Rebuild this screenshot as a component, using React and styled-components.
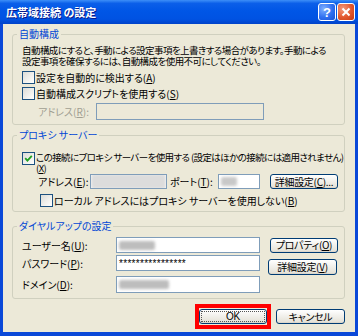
import React from 'react';
import styled, { createGlobalStyle } from 'styled-components';

const GlobalStyle = createGlobalStyle`
  html, body {
    margin: 0;
    padding: 0;
  }
  body {
    background: #ffffff;
    font-family: "Noto Sans CJK JP", "Noto Sans", sans-serif;
    font-size: 10px;
    line-height: 13px;
    font-feature-settings: "palt";
    color: #000;
  }
`;

const Window = styled.div`
  width: 358px;
  height: 336px;
  display: flex;
  flex-direction: column;
  overflow: hidden;
`;

const TitleBar = styled.div`
  height: 24px;
  flex: none;
  display: flex;
  align-items: center;
  padding: 0 3px 0 6px;
  box-sizing: border-box;
  background: linear-gradient(
    to bottom,
    #3d8ff8 0%,
    #0b5fe9 14%,
    #0056e6 45%,
    #0052e2 80%,
    #0042c8 100%
  );
`;

const Title = styled.div`
  flex: 1;
  color: #fff;
  font-weight: bold;
  font-size: 11px;
  line-height: 14px;
  text-shadow: 1px 1px 0 #0a1a8a;
`;

const CaptionButton = styled.div`
  width: 18px;
  height: 18px;
  box-sizing: border-box;
  border: 1px solid #fff;
  border-radius: 3px;
  margin-left: 1px;
  display: flex;
  align-items: center;
  justify-content: center;
  color: #fff;
  font-family: "Liberation Sans", sans-serif;
  font-weight: bold;
  font-size: 13px;
  background: ${p =>
    p.$close
      ? 'radial-gradient(circle at 30% 30%, #f3997c 0%, #e2582f 55%, #c63b12 100%)'
      : 'radial-gradient(circle at 30% 30%, #7fb0ff 0%, #2f6ff0 55%, #1a52d6 100%)'};
`;

const Body = styled.div`
  flex: 1;
  background: #ece9d8;
  border: 3px solid #0a48d8;
  border-top: none;
  border-bottom-width: 4px;
  padding: 4px 10px 0 9px;
  display: flex;
  flex-direction: column;
`;

const Group = styled.fieldset`
  margin: ${p => p.$top || 0}px 0 0 0;
  padding: 0;
  border: 1px solid #d0d0bf;
  border-radius: 3px;
  min-width: 0;
`;

const Legend = styled.legend`
  margin-left: 4px;
  padding: 0 2px;
  color: #0046d5;
  font-size: 10px;
  line-height: 12px;
`;

const GroupInner = styled.div`
  padding: ${p => p.$pad || '0 9px 4px 9px'};
  display: flex;
  flex-direction: column;
`;

const Para = styled.p`
  margin: 5px 0 0 0;
  font-size: 9.5px;
  line-height: 11px;
  letter-spacing: -0.55px;
  white-space: nowrap;
`;

const CheckRow = styled.label`
  display: flex;
  align-items: ${p => (p.$top ? 'flex-start' : 'center')};
  margin: ${p => p.$m || '0'};
  padding-left: ${p => p.$indent || 0}px;
  font-size: ${p => p.$fs || 10}px;
  line-height: ${p => p.$lh || 13}px;
  white-space: nowrap;
  letter-spacing: ${p => p.$ls || 0}px;
`;

const Box = styled.span`
  width: 13px;
  height: 13px;
  box-sizing: border-box;
  border: 1px solid #1c5180;
  background: linear-gradient(135deg, #dcdcd7 0%, #f5f5f2 70%, #ffffff 100%);
  display: inline-flex;
  align-items: center;
  justify-content: center;
  flex: none;
  margin-right: 1px;
`;

const Row = styled.div`
  display: flex;
  align-items: center;
  margin: ${p => p.$m || '0'};
  padding-left: ${p => p.$indent || 0}px;
`;

const Label = styled.span`
  width: ${p => p.$w}px;
  flex: none;
  margin-top: ${p => p.$mt || 0}px;
  color: ${p => (p.$disabled ? '#a19f92' : '#000')};
  white-space: nowrap;
`;

const Field = styled.div`
  width: ${p => p.$w}px;
  height: ${p => p.$h || 16}px;
  flex: none;
  box-sizing: border-box;
  margin-top: ${p => p.$mt || 0}px;
  border: 1px solid #7f9db9;
  background: ${p => (p.$disabled ? '#ece9d8' : '#ffffff')};
  display: flex;
  align-items: center;
  padding-left: ${p => (p.$flush ? 0 : 2)}px;
  overflow: hidden;
  font-family: "Liberation Sans", sans-serif;
  font-size: 10px;
  letter-spacing: 0.3px;
`;

const Smudge = styled.div`
  width: ${p => p.$w}px;
  height: ${p => p.$h || 8}px;
  background: ${p => p.$c || '#bdbdbd'};
  filter: blur(1.6px);
  border-radius: 2px;
`;

const Button = styled.div`
  width: ${p => p.$w}px;
  height: ${p => p.$h || 15}px;
  flex: none;
  box-sizing: border-box;
  margin-left: ${p => p.$ml || 0}px;
  margin-top: ${p => p.$shift || 0}px;
  margin-bottom: ${p => -(p.$shift || 0)}px;
  border: 1px solid #003c74;
  border-radius: 3px;
  background: linear-gradient(to bottom, #ffffff 0%, #f3f2ee 40%, #e6e3d9 90%, #d6d0c5 100%);
  display: flex;
  align-items: center;
  justify-content: center;
  font-size: 10px;
  line-height: 12px;
  letter-spacing: -0.3px;
  white-space: nowrap;
`;

const FocusRing = styled.div`
  margin: 1px;
  align-self: stretch;
  flex: 1;
  border: 1px dotted #555;
  display: flex;
  align-items: center;
  justify-content: center;
  font-family: "Liberation Sans", sans-serif;
`;

const DialGrid = styled.div`
  display: grid;
  grid-template-columns: 94px 144px auto;
  align-items: center;
  row-gap: 2px;
  margin-top: 5px;
`;

const Footer = styled.div`
  display: flex;
  justify-content: flex-end;
  align-items: center;
  margin-top: 5px;
`;

const Highlight = styled.div`
  border: 4px solid #ff0000;
  padding: 1px 0;
  margin-right: 5px;
`;

const Check = () => (
  <svg width="9" height="9" viewBox="0 0 9 9">
    <path d="M1.2 4.2 L3.4 6.6 L7.8 1.8" fill="none" stroke="#21a121" strokeWidth="1.8" />
  </svg>
);

const CloseGlyph = () => (
  <svg width="10" height="10" viewBox="0 0 10 10">
    <path d="M1.5 1.5 L8.5 8.5 M8.5 1.5 L1.5 8.5" stroke="#fff" strokeWidth="2" />
  </svg>
);

export default function App() {
  return (
    <>
      <GlobalStyle />
      <Window>
        <TitleBar>
          <Title>広帯域接続 の設定</Title>
          <CaptionButton>?</CaptionButton>
          <CaptionButton $close>
            <CloseGlyph />
          </CaptionButton>
        </TitleBar>
        <Body>
          <Group>
            <Legend>自動構成</Legend>
            <GroupInner $pad="0 9px 4px 9px">
              <Para>
                自動構成にすると、手動による設定事項を上書きする場合があります。手動による
                <br />
                設定事項を確保するには、自動構成を使用不可にしてください。
              </Para>
              <CheckRow $m="4px 0 0 0">
                <Box />
                <span>
                  設定を自動的に検出する(<u>A</u>)
                </span>
              </CheckRow>
              <CheckRow $m="3px 0 0 0">
                <Box />
                <span>
                  自動構成スクリプトを使用する(<u>S</u>)
                </span>
              </CheckRow>
              <Row $m="3px 0 0 0" $indent={16}>
                <Label $w={58} $disabled>
                  アドレス(<u>R</u>):
                </Label>
                <Field $w={168} $h={17} $disabled />
              </Row>
            </GroupInner>
          </Group>

          <Group $top={4}>
            <Legend>プロキシ サーバー</Legend>
            <GroupInner $pad="0 7px 4px 9px">
              <CheckRow $top $fs={9.5} $lh={11} $ls={-0.6} $m="11px 0 0 0">
                <Box>
                  <Check />
                </Box>
                <span>
                  この接続にプロキシ サーバーを使用する (設定はほかの接続には適用されません)
                  <br />
                  (<u>X</u>)
                </span>
              </CheckRow>
              <Row $indent={16}>
                <Label $w={52}>
                  アドレス(<u>E</u>):
                </Label>
                <Field $w={77} $h={15} $flush>
                  <Smudge $w={77} $h={15} $c="#dcdcdc" />
                </Field>
                <Label $w={48} style={{ marginLeft: 3 }}>
                  ポート(<u>T</u>):
                </Label>
                <Field $w={42} $h={15}>
                  <Smudge $w={16} $h={9} $c="#c8c8c8" />
                </Field>
                <Button $w={68} $ml={10}>
                  詳細設定(<u>C</u>)...
                </Button>
              </Row>
              <CheckRow $m="5px 0 0 0" $indent={18}>
                <Box />
                <span>
                  ローカル アドレスにはプロキシ サーバーを使用しない(<u>B</u>)
                </span>
              </CheckRow>
            </GroupInner>
          </Group>

          <Group $top={8}>
            <Legend>ダイヤルアップの設定</Legend>
            <GroupInner $pad="0 7px 5px 9px">
              <DialGrid>
                <Label>
                  ユーザー名(<u>U</u>):
                </Label>
                <Field $w={144}>
                  <Smudge $w={36} $h={9} />
                </Field>
                <Button $w={68} $ml={10}>
                  プロパティ(<u>O</u>)
                </Button>
                <Label>
                  パスワード(<u>P</u>):
                </Label>
                <Field $w={144}>****************</Field>
                <Button $w={69} $h={16} $ml={8} $shift={4}>
                  詳細設定(<u>V</u>)
                </Button>
                <Label $mt={3}>
                  ドメイン(<u>D</u>):
                </Label>
                <Field $w={144} $h={17} $mt={3}>
                  <Smudge $w={50} $h={9} />
                </Field>
                <span />
              </DialGrid>
            </GroupInner>
          </Group>

          <Footer>
            <Highlight>
              <Button $w={68}>
                <FocusRing>OK</FocusRing>
              </Button>
            </Highlight>
            <Button $w={69}>キャンセル</Button>
          </Footer>
        </Body>
      </Window>
    </>
  );
}
